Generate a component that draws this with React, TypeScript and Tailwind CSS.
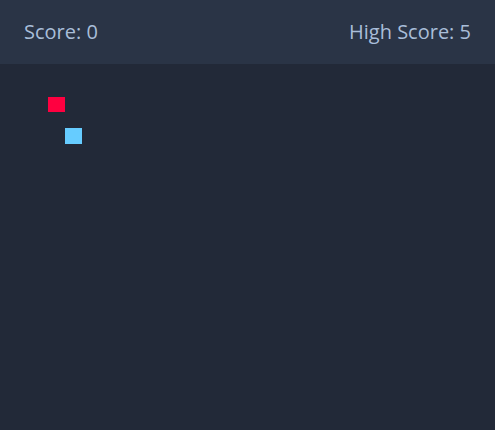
import React from "react";

export default function App() {
  return (
    <div className="w-[495px] h-[430px] bg-[#222938] flex flex-col" style={{ fontFamily: '"Open Sans", sans-serif' }}>
      <div className="h-16 bg-[#2a3446] flex items-center justify-between px-6 text-[20px] text-[#a9bed9]">
        <span>Score: 0</span>
        <span>High Score: 5</span>
      </div>
      <div className="relative flex-1">
        <div className="absolute left-[48px] top-[33px] w-[17px] h-[15px] bg-[#ff0040]" />
        <div className="absolute left-[65px] top-[64px] w-[17px] h-[16px] bg-[#66ccff]" />
      </div>
    </div>
  );
}
